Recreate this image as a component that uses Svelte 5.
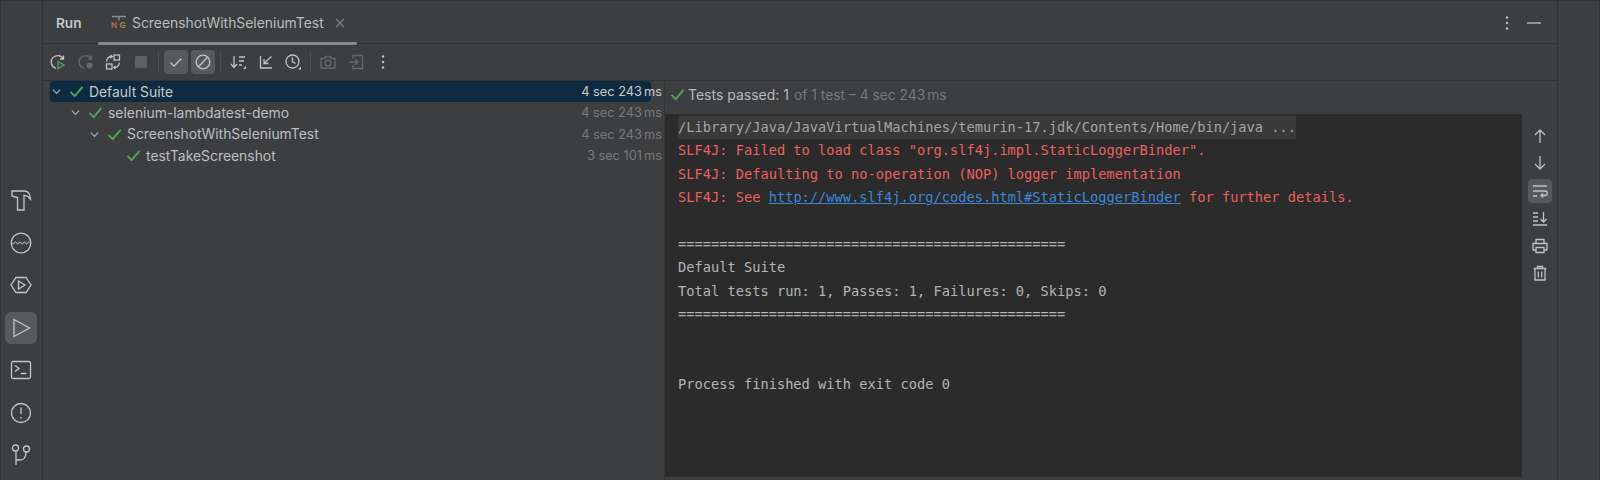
<script>
  const rows = [
    { name: 'Default Suite', time: '4 sec 243', depth: 0, open: true, selected: true },
    { name: 'selenium-lambdatest-demo', time: '4 sec 243', depth: 1, open: true },
    { name: 'ScreenshotWithSeleniumTest', time: '4 sec 243', depth: 2, open: true },
    { name: 'testTakeScreenshot', time: '3 sec 101', depth: 3, open: false }
  ];
</script>

<div class="ide">
  <nav class="stripe">
    <button class="sb" aria-label="Build"><svg viewBox="0 0 24 24"><path d="M3 3h12.500c3 0 5.500 3 6 8-2-2.500-4.500-3.700-6.500-3.700V22H8.500V9.500L3 8z"/></svg></button>
    <button class="sb" aria-label="Services"><svg viewBox="0 0 24 24"><circle cx="12" cy="12" r="9.800"/><path d="M3 12c1 1.500 1.500 1.500 2.300 0s1.500-1.500 2.300 0 1.500 1.500 2.200 0 1.500-1.500 2.200 0 1.500 1.500 2.200 0 1.500-1.500 2.300 0 1.500 1.500 2.300 0 1.200-1 1.700-.5" stroke-width="1"/></svg></button>
    <button class="sb" aria-label="Profiler"><svg viewBox="0 0 24 24"><path d="M7 4.500h10l5 7.500-5 7.500H7L2 12z"/><path d="M9.500 8l6.500 4-6.500 4z"/></svg></button>
    <button class="sb active" aria-label="Run"><svg viewBox="0 0 24 24"><path d="M5 3.500 20.500 12 5 20.500z"/></svg></button>
    <button class="sb" aria-label="Terminal"><svg viewBox="0 0 24 24"><rect x="2.500" y="3.500" width="19" height="17" rx="1.500"/><path d="m6 7.500 4 3-4 3M12 15.500h5.500"/></svg></button>
    <button class="sb" aria-label="Problems"><svg viewBox="0 0 24 24"><circle cx="12" cy="12" r="9.500"/><path d="M12 6.500v6.500M12 16v1.500"/></svg></button>
    <button class="sb" aria-label="Git"><svg viewBox="0 0 24 24"><circle cx="6.500" cy="5" r="3"/><circle cx="17.500" cy="6" r="3"/><path d="M7 8v14M7 17h4c4 0 6-3 6-8"/></svg></button>
  </nav>

  <main class="panel">
    <header class="tabs">
      <span class="title">Run</span>
      <div class="tab">
        <svg class="ng" viewBox="0 0 16 16"><path d="M1 1.500h14M8 1.500v4" stroke="#8a8d91" fill="none" stroke-width="1.500"/><text x="0" y="13" class="n">N</text><text x="8.500" y="13" class="g">G</text></svg>
        <span class="tabname">ScreenshotWithSeleniumTest</span>
        <svg class="close" viewBox="0 0 10 10"><path d="m1 1 8 8M9 1 1 9"/></svg>
      </div>
      <div class="tabactions">
        <svg class="i16" viewBox="0 0 16 16"><circle cx="8" cy="2.500" r="1.200" class="dot"/><circle cx="8" cy="8" r="1.200" class="dot"/><circle cx="8" cy="13.500" r="1.200" class="dot"/></svg>
        <svg class="i16" viewBox="0 0 16 16"><path d="M1 8h14"/></svg>
      </div>
    </header>

    <div class="toolbar">
      <button class="tb" aria-label="Rerun"><svg viewBox="0 0 16 16"><path d="M13.500 5A6.500 6.500 0 1 0 6 14.300M13.500 1.500V5H10"/><path d="M8 7.500v7l6-3.500z" stroke="#4fa55a"/></svg></button>
      <button class="tb dim" aria-label="Rerun failed"><svg viewBox="0 0 16 16"><path d="M13.500 5A6.500 6.500 0 1 0 6 14.300M13.500 1.500V5H10"/><circle cx="11.500" cy="11.500" r="3" class="dot"/></svg></button>
      <button class="tb" aria-label="Toggle auto"><svg viewBox="0 0 16 16"><rect x="9" y="1" width="5.500" height="5"/><rect x="1.500" y="10" width="5.500" height="5"/><path d="M1.500 7.500C2 4 4 2.500 7 2.500M5.500 1l1.800 1.500L5.500 4M14.500 8.500c-.5 3.500-2.500 5-5.500 5M10.500 12 8.800 13.500 10.500 15"/></svg></button>
      <button class="tb" aria-label="Stop"><svg viewBox="0 0 16 16"><rect x="2" y="2" width="12" height="12" rx="1.500" fill="#5e6063" stroke="none"/></svg></button>
      <i class="sep"></i>
      <button class="tb on" aria-label="Show passed"><svg viewBox="0 0 16 16"><path d="m2.500 8.500 3.500 3.500 7.500-7.500"/></svg></button>
      <button class="tb on" aria-label="Show ignored"><svg viewBox="0 0 16 16"><circle cx="8" cy="8" r="6.800"/><path d="M3.500 12.800 12.500 3.200"/></svg></button>
      <i class="sep"></i>
      <button class="tb" aria-label="Sort"><svg viewBox="0 0 16 16"><path d="M4 2v11M1 10l3 3.500L7 10M9 3h6M9 7h5M9 11h3"/><path d="M13 15h3v-3z" class="fill"/></svg></button>
      <button class="tb" aria-label="Collapse"><svg viewBox="0 0 16 16"><path d="M2.500 2v12H14M13.500 2.500 6 9.500M6 5v4.500h4.500"/></svg></button>
      <button class="tb" aria-label="History"><svg viewBox="0 0 16 16"><circle cx="7.500" cy="7.500" r="6.500"/><path d="M7.500 3.500v4.300l3 1.700"/><path d="M13 15.500h3v-3z" class="fill"/></svg></button>
      <i class="sep"></i>
      <button class="tb dim" aria-label="Snapshot"><svg viewBox="0 0 16 16"><path d="M1 4.500h3.500L6 2.500h4l1.500 2H15V14H1z"/><circle cx="8" cy="9" r="2.800"/></svg></button>
      <button class="tb dim" aria-label="Import"><svg viewBox="0 0 16 16"><path d="M5 5V1.500h9.500v13H5V11M1 8h8.500M7 5.200 10 8l-3 2.800"/></svg></button>
      <button class="tb" aria-label="More"><svg viewBox="0 0 16 16"><circle cx="8" cy="2.500" r="1.200" class="dot"/><circle cx="8" cy="8" r="1.200" class="dot"/><circle cx="8" cy="13.500" r="1.200" class="dot"/></svg></button>
    </div>

    <div class="split">
      <section class="tree">
        {#each rows as r}
          <div class="row" class:selected={r.selected} style="padding-left:{r.depth * 19}px">
            <span class="chev">
              {#if r.open}<svg viewBox="0 0 10 10"><path d="m1 3 4 4 4-4"/></svg>{/if}
            </span>
            <svg class="ok" viewBox="0 0 16 14"><path d="m1.500 7.500 4.500 4.500 8.500-10"/></svg>
            <span class="name">{r.name}</span>
            <span class="time">{r.time}<span class="ms">ms</span></span>
          </div>
        {/each}
      </section>

      <section class="result">
        <div class="status">
          <svg class="ok" viewBox="0 0 16 14"><path d="m1.500 7.500 4.500 4.500 8.500-10"/></svg>
          <span class="passed">Tests passed: 1</span>
          <span class="rest">of 1 test – 4 sec 243<span class="ms">ms</span></span>
        </div>
        <div class="body">
          <pre class="console"><span class="cmd">/Library/Java/JavaVirtualMachines/temurin-17.jdk/Contents/Home/bin/java ...</span>
<span class="err">SLF4J: Failed to load class "org.slf4j.impl.StaticLoggerBinder".</span>
<span class="err">SLF4J: Defaulting to no-operation (NOP) logger implementation</span>
<span class="err">SLF4J: See <a href="#top">http://www.slf4j.org/codes.html#StaticLoggerBinder</a> for further details.</span>

===============================================
Default Suite
Total tests run: 1, Passes: 1, Failures: 0, Skips: 0
===============================================


Process finished with exit code 0</pre>
          <aside class="side">
            <button class="rb" aria-label="Up"><svg viewBox="0 0 16 16"><path d="M8 15V2M3 7l5-5 5 5"/></svg></button>
            <button class="rb" aria-label="Down"><svg viewBox="0 0 16 16"><path d="M8 1v13M3 9l5 5 5-5"/></svg></button>
            <button class="rb on" aria-label="Wrap"><svg viewBox="0 0 16 16"><path d="M1 3h14M1 8h12c3 0 3 4.500 0 4.500H9M11 10.500 9 12.500l2 2M1 13h4"/></svg></button>
            <button class="rb" aria-label="Scroll to end"><svg viewBox="0 0 16 16"><path d="M1 3h5M1 7h5M1 11h5M11.500 2v10M8.500 9l3 3 3-3M1 15h14"/></svg></button>
            <button class="rb" aria-label="Print"><svg viewBox="0 0 16 16"><path d="M4 5.500V1.500h8v4M4 12H1V5.500h14V12h-3"/><path d="M4 9.500h8v5H4z"/></svg></button>
            <button class="rb" aria-label="Clear"><svg viewBox="0 0 16 16"><path d="M1.500 3.500h13M5.500 3.500V1.500h5v2M3 3.500v11.500h10V3.500M6.300 6.500v6M9.700 6.500v6"/></svg></button>
          </aside>
        </div>
      </section>
    </div>
  </main>

  <div class="rstripe"></div>
</div>

<style>
  :global(body) { margin: 0; background: #3c3e40; }
  .ide {
    display: flex; width: 1600px; height: 480px; overflow: hidden;
    background: #3c3e40; color: #bcbec1;
    font-family: Inter, "Liberation Sans", sans-serif; font-size: 13.9px;
    border-top: 1px solid #323436; box-sizing: border-box;
  }
  button { border: 0; background: none; padding: 0; display: flex; align-items: center; justify-content: center; color: inherit; }
  svg { fill: none; stroke: #c0c2c5; stroke-width: 1.3; display: block; }
  svg .dot { fill: #c0c2c5; stroke: none; }
  svg .fill { fill: #c0c2c5; stroke: none; }

  .stripe {
    width: 42px; flex: none; box-sizing: border-box; border-left: 1px solid #303234;
    display: flex; flex-direction: column; justify-content: flex-end; align-items: center;
    gap: 10.500px; padding: 0 1px 9px 0;
  }
  .sb { width: 32px; height: 32px; border-radius: 6px; }
  .sb svg { width: 24px; height: 24px; stroke: #c4c6c8; stroke-width: 1.300; }
  .sb.active { background: #565a5c; }

  .panel {
    flex: 1; min-width: 0; display: flex; flex-direction: column;
    border-left: 1px solid #313335; border-right: 1px solid #313335;
  }
  .tabs {
    height: 43px; flex: none; display: flex; align-items: center; position: relative;
    border-bottom: 1px solid #313335; padding: 1px 0 0 13px; box-sizing: border-box;
  }
  .title { font-weight: 600; width: 55px; color: #c6c8ca; font-size: 13.6px; }
  .tab {
    display: flex; align-items: center; height: 100%; position: relative;
    margin-left: -13px; padding: 0 10px 0 13px; width: 236px;
  }
  .tab::after {
    content: ""; position: absolute; left: 0; right: 0; bottom: -2px; height: 3px;
    border-radius: 2px; background: #868a8f;
  }
  .ng { width: 16px; height: 16px; margin-right: 5px; }
  .ng text { font: 700 8px Inter, sans-serif; stroke: none; }
  .ng .n { fill: #b0664c; }
  .ng .g { fill: #a08a4a; }
  .tabname { color: #b9bbbe; font-size: 13.900px; }
  .close { width: 10px; height: 10px; margin-left: 11px; stroke: #7d8084; }
  .tabactions { margin-left: auto; display: flex; gap: 11px; padding-right: 15px; align-items: center; }
  .i16 { width: 16px; height: 16px; }

  .toolbar {
    height: 36px; flex: none; display: flex; align-items: center; gap: 3.500px; padding-left: 3px;
    border-bottom: 1px solid #313335;
  }
  .tb { width: 24px; height: 24px; border-radius: 4px; }
  .tb svg { width: 16px; height: 16px; }
  .tb.dim svg { stroke: #66686b; }
  .tb.dim svg .dot { fill: #66686b; }
  .tb.on { background: #565a5c; }
  .sep { width: 1px; height: 22px; background: #4c4e50; margin: 0 1.500px; }

  .split { flex: 1; min-height: 0; display: flex; }
  .tree { width: 622px; flex: none; box-sizing: border-box; padding: 0 13px 0 7px; border-right: 1px solid #333537; }
  .row { height: 21.300px; display: flex; align-items: center; border-radius: 4px; box-sizing: border-box; }
  .row.selected { background: #0d2a40; color: #c6c9cc; }
  .row.selected .time { color: #c8cacc; }
  .chev { width: 19px; flex: none; display: flex; justify-content: center; margin-left: -3px; margin-right: 3px; }
  .chev svg { width: 9px; height: 9px; stroke: #aeb0b3; }
  .ok { width: 15px; height: 13px; flex: none; stroke: #4fa55a; stroke-width: 2; }
  .name { margin-left: 5px; }
  .time { margin-left: auto; margin-right: -11px; color: #77797c; font-size: 12.800px; }
  .ms { margin-left: 2px; }

  .result { flex: 1; min-width: 0; display: flex; flex-direction: column; }
  .status { height: 33px; flex: none; display: flex; align-items: center; padding: 0 0 6px 5px; box-sizing: border-box; gap: 3px; }
  .passed { color: #b6b8bb; font-size: 14px; }
  .rest { color: #77797c; font-size: 13.800px; margin-left: 2px; }
  .body { flex: 1; min-height: 0; display: flex; }
  .console {
    flex: 1; min-width: 0; margin: 0 0 3px 0; padding: 2px 0 0 13px; background: #2b2b2b;
    font-family: "DejaVu Sans Mono", "Liberation Mono", monospace; font-size: 13.700px; line-height: 23.400px;
    color: #b2b4b6; overflow: hidden;
  }
  .cmd { background: #3a3a3b; color: #a3a5a7; display: inline-block; }
  .err { color: #e9605e; }
  a { color: #3d86d8; text-decoration: underline; }
  .side { width: 35px; flex: none; display: flex; flex-direction: column; align-items: center; padding-top: 10px; }
  .rb { width: 24px; height: 24px; border-radius: 4px; margin-bottom: 3.400px; }
  .rb svg { width: 16px; height: 16px; }
  .rb.on { background: #565a5c; }
  .rstripe { width: 42px; flex: none; border-right: 1px solid #2f3133; box-sizing: border-box; }
</style>
